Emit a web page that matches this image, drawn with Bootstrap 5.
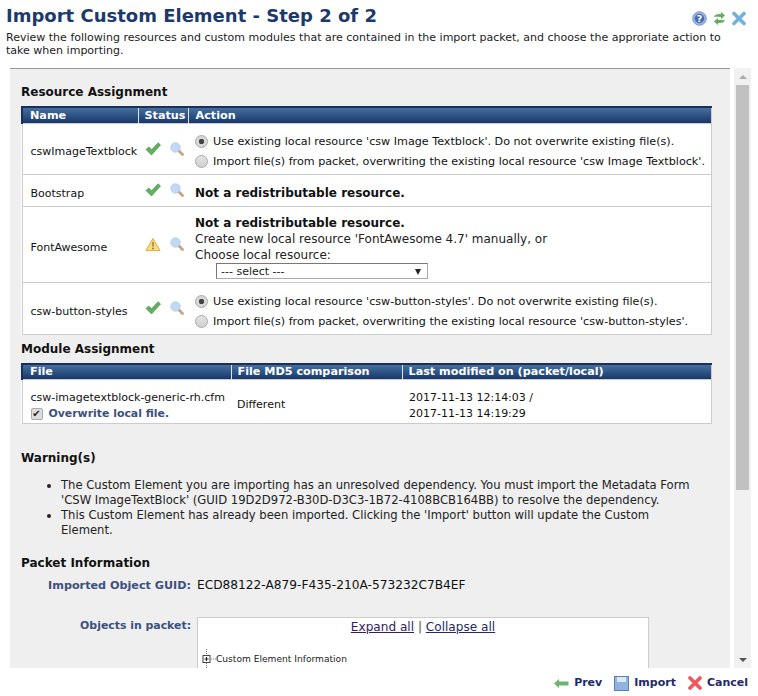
<!DOCTYPE html>
<html lang="en">
<head>
<meta charset="utf-8">
<title>Import Custom Element</title>
<link href="https://cdn.jsdelivr.net/npm/bootstrap@5.3.0/dist/css/bootstrap.min.css" rel="stylesheet">
<style>
html,body{height:696px;overflow:hidden;background:#fff}
body{font-family:"DejaVu Sans",Verdana,sans-serif;font-size:11px;line-height:15px;color:#111;position:relative}
.page-head{padding:4px 6px 0 6px;height:68px;position:relative}
.page-title{font-size:18px;line-height:24px;font-weight:700;color:#1b3a6b;margin:0}
.page-intro{font-size:11.02px;line-height:13px;margin:3px 0 0;color:#222;max-width:722px}
.head-icons{position:absolute;right:12px;top:11px;gap:6px}
.body-row{height:600px;padding-left:10px;padding-right:7px;gap:4px}
.main-panel{width:720px;background:#efefef;border-top:1px solid #999;overflow:hidden;padding:0 18px 0 11px}
.sec-title{font-size:12px;line-height:15px;font-weight:700;color:#111;margin:0}
.res-table{width:691px;table-layout:fixed;border-collapse:collapse;background:#fff;border:1px solid #ccc;margin:0}
.res-table th{background:linear-gradient(#44709f,#18376a);border-top:2px solid #1b2f5a;border-left:1px solid #dfe6ee;color:#fff;font-size:11.2px;font-weight:700;height:16px;line-height:12px;padding:1px 0 0 6px;white-space:nowrap;overflow:hidden}
.res-table th:first-child{border-left:2px solid #1b2f5a;padding-left:7px}
.res-table th.th-act{padding-left:7px}
.res-table td{border-top:1px solid #ccc;padding:6px 0 0 8px;vertical-align:middle;font-size:11px;line-height:15px;white-space:nowrap}
.res-table td.act{padding-left:7px}
.res-table td.st{padding:0 0 0 7px}
.res-table td.mod{padding-top:8px;line-height:16px}
.res-table td.mod-b{padding-left:6px;padding-top:6px}
.res-table td.mod-c{padding-left:7px}
.st-box{gap:9px}
.opt-line{height:20px;gap:5px;font-size:11.17px}
.opt-line input{appearance:none;width:13px;height:13px;margin:0;border-radius:50%;border:1px solid #aaa;background:linear-gradient(#e4e4e4,#cfcfcf);flex:none;display:block}
.opt-line input:checked{background:radial-gradient(circle,#444 0 2.5px,#d8d8d8 3px)}
.big-b{font-size:12px;font-weight:700;line-height:16px;color:#111}
.big-n{font-size:12px;line-height:16px;color:#222}
.sel-box{width:212px;height:16px;margin-left:21px;border:1px solid #aaa;border-top-color:#777;border-left-color:#777;background:#fff;font-size:11px;line-height:14px;padding:1px 4px 0;color:#222}
.sel-arrow{width:0;height:0;border-left:3.5px solid transparent;border-right:3.5px solid transparent;border-top:6px solid #222;margin-right:2px}
.chk-row{gap:6px}
.chk-pic{width:12px;height:12px;border:1px solid #aaa;border-radius:2px;background:#ddd;flex:none;display:flex;align-items:center;justify-content:center;font-size:10px;line-height:10px;color:#222}
.ovr-lab{font-weight:700;color:#3c5080;font-size:10.9px;line-height:16px}
.warn-list{margin:0;padding:0 12px 0 40px;font-size:11.6px;line-height:15px;color:#222}
.form-lab{width:170px;text-align:right;font-weight:700;color:#3c5080;font-size:11.2px;line-height:15px;flex:none;white-space:nowrap}
.form-lab.lab-sm{font-size:10.9px;padding-top:1px}
.form-val{font-size:12.2px;line-height:15px;margin-left:6px;color:#111}
.tree-box{width:452px;height:120px;margin-left:6px;background:#fff;border:1px solid #ccc;font-size:12.1px}
.tree-links{text-align:center;line-height:15px;padding-top:2px;color:#555}
.tree-links a{color:#1f2a66}
.tree-links a.seen{color:#33205f}
.tree-row{margin-top:14px;padding-left:4px;font-size:9.1px;line-height:20px;color:#222}
.scroll-col{width:17px;background:#f1f1f1;position:relative;flex:none}
.scroll-up,.scroll-dn{height:17px;display:flex;align-items:center;justify-content:center}
.arrow-u{width:0;height:0;border-left:4px solid transparent;border-right:4px solid transparent;border-bottom:4px solid #a9a9a9}
.arrow-d{width:0;height:0;border-left:4px solid transparent;border-right:4px solid transparent;border-top:4px solid #555}
.scroll-thumb{margin:0 2px;height:405px;background:#c1c1c1}
.scroll-track{height:161px}
.foot-bar{height:28px;padding:7px 10px 0 0;gap:12px;justify-content:flex-end}
.foot-bar a{color:#1f2a66;font-weight:700;font-size:11px;line-height:16px;text-decoration:none;gap:5px;height:16px}
.gap-b{height:7px}
.gap-c{height:6px}
.pad-top{height:16px}
</style>
</head>
<body>
<svg width="0" height="0" class="position-absolute">
  <symbol id="ic-check" viewBox="0 0 16 14"><path d="M1 7.500 3.800 5 6.500 7.800 13.200.8 15.500 3 6.500 13Z" fill="#62b162" stroke="#3f8a3f" stroke-width=".6" stroke-linejoin="round"/></symbol>
  <symbol id="ic-glass" viewBox="0 0 14 14"><path d="M8.500 8.500l4 4" stroke="#c9a27e" stroke-width="2.800" stroke-linecap="round"/><circle cx="5.500" cy="5.500" r="4.700" fill="#c3d8f5" stroke="#a9c5ec" stroke-width=".8"/></symbol>
</svg>
<div class="page-head">
  <h1 class="page-title">Import Custom Element - Step 2 of 2</h1>
  <p class="page-intro">Review the following resources and custom modules that are contained in the import packet, and choose the approriate action to take when importing.</p>
  <div class="head-icons d-flex align-items-center">
    <svg width="15" height="15" viewBox="0 0 15 15"><circle cx="7.500" cy="7.500" r="6.800" fill="#9db6e0" stroke="#7b98cf"/><circle cx="7.500" cy="7.500" r="4.700" fill="#4a6db0"/><text x="7.500" y="11" text-anchor="middle" font-size="9.500" font-weight="700" fill="#fff" font-family="DejaVu Sans">?</text></svg>
    <svg width="13" height="15" viewBox="0 0 13 15"><path d="M1 6C2 3 5 3 8 3V1l4 3.500L8 8V6C5 6 3 5.500 1 6Z" fill="#62ad62"/><path d="M12 9c-1 3-4 3-7 3v2L1 10.500 5 7v2c3 0 5 .5 7 0Z" fill="#62ad62"/></svg>
    <svg width="14" height="15" viewBox="0 0 14 15"><path d="M2 2.500 12 12.500M12 2.500 2 12.500" stroke="#6fb2dc" stroke-width="3.600" stroke-linecap="round"/></svg>
  </div>
</div>
<div class="body-row d-flex">
  <div class="main-panel">
    <div class="pad-top"></div>
    <h2 class="sec-title">Resource Assignment</h2>
    <div class="gap-c"></div>
    <table class="res-table">
      <colgroup><col style="width:116px"><col style="width:50px"><col></colgroup>
      <tr><th>Name</th><th>Status</th><th class="th-act">Action</th></tr>
      <tr style="height:51px">
        <td>cswImageTextblock</td>
        <td class="st"><div class="st-box d-flex align-items-center">
          <svg width="16" height="14"><use href="#ic-check"/></svg><svg width="14" height="14"><use href="#ic-glass"/></svg>
        </div></td>
        <td class="act">
          <div class="opt-line d-flex align-items-center"><input type="radio" checked name="r1"><span>Use existing local resource 'csw Image Textblock'. Do not overwrite existing file(s).</span></div>
          <div class="opt-line d-flex align-items-center"><input type="radio" name="r1"><span>Import file(s) from packet, overwriting the existing local resource 'csw Image Textblock'.</span></div>
        </td>
      </tr>
      <tr style="height:32px">
        <td>Bootstrap</td>
        <td class="st"><div class="st-box d-flex align-items-center">
          <svg width="16" height="14"><use href="#ic-check"/></svg><svg width="14" height="14"><use href="#ic-glass"/></svg>
        </div></td>
        <td class="act"><div class="big-b">Not a redistributable resource.</div></td>
      </tr>
      <tr style="height:76px">
        <td>FontAwesome</td>
        <td class="st"><div class="st-box d-flex align-items-center">
          <svg width="16" height="15" viewBox="0 0 17 15"><path d="M8.500 1 16 14H1Z" fill="#f7dc7a" stroke="#d9a648" stroke-linejoin="round"/><path d="M7.700 5h1.600l-.3 5H8ZM7.700 11h1.600v1.500H7.700Z" fill="#8a6a20"/></svg>
          <svg width="14" height="14"><use href="#ic-glass"/></svg>
        </div></td>
        <td class="act">
          <div class="big-b">Not a redistributable resource.</div>
          <div class="big-n">Create new local resource 'FontAwesome 4.7' manually, or</div>
          <div class="big-n">Choose local resource:</div>
          <div class="sel-box d-flex align-items-center justify-content-between"><span>--- select ---</span><span class="sel-arrow"></span></div>
        </td>
      </tr>
      <tr style="height:52px">
        <td>csw-button-styles</td>
        <td class="st"><div class="st-box d-flex align-items-center">
          <svg width="16" height="14"><use href="#ic-check"/></svg><svg width="14" height="14"><use href="#ic-glass"/></svg>
        </div></td>
        <td class="act">
          <div class="opt-line d-flex align-items-center"><input type="radio" checked name="r2"><span>Use existing local resource 'csw-button-styles'. Do not overwrite existing file(s).</span></div>
          <div class="opt-line d-flex align-items-center"><input type="radio" name="r2"><span>Import file(s) from packet, overwriting the existing local resource 'csw-button-styles'.</span></div>
        </td>
      </tr>
    </table>
    <div class="gap-b"></div>
    <h2 class="sec-title">Module Assignment</h2>
    <div class="gap-c"></div>
    <table class="res-table">
      <colgroup><col style="width:209px"><col style="width:171px"><col></colgroup>
      <tr><th>File</th><th>File MD5 comparison</th><th>Last modified on (packet/local)</th></tr>
      <tr style="height:44px">
        <td class="mod">
          <div>csw-imagetextblock-generic-rh.cfm</div>
          <div class="d-flex align-items-center chk-row"><span class="chk-pic">✔</span><span class="ovr-lab">Overwrite local file.</span></div>
        </td>
        <td class="mod mod-b">Different</td>
        <td class="mod mod-c"><div>2017-11-13 12:14:03 /</div><div>2017-11-13 14:19:29</div></td>
      </tr>
    </table>
    <div style="height:27px"></div>
    <h2 class="sec-title">Warning(s)</h2>
    <div style="height:12px"></div>
    <ul class="warn-list">
      <li>The Custom Element you are importing has an unresolved dependency. You must import the Metadata Form 'CSW ImageTextBlock' (GUID 19D2D972-B30D-D3C3-1B72-4108BCB164BB) to resolve the dependency.</li>
      <li>This Custom Element has already been imported. Clicking the 'Import' button will update the Custom Element.</li>
    </ul>
    <div style="height:18px"></div>
    <h2 class="sec-title">Packet Information</h2>
    <div style="height:7px"></div>
    <div class="d-flex">
      <div class="form-lab">Imported Object GUID:</div>
      <div class="form-val">ECD88122-A879-F435-210A-573232C7B4EF</div>
    </div>
    <div style="height:24px"></div>
    <div class="d-flex">
      <div class="form-lab lab-sm">Objects in packet:</div>
      <div class="tree-box">
        <div class="tree-links"><a class="seen" href="#">Expand all</a> | <a href="#">Collapse all</a></div>
        <div class="tree-row d-flex align-items-center">
          <svg width="14" height="20" viewBox="0 0 14 20"><path d="M4.500 0v6M4.500 14v6M9 10h5" stroke="#777" stroke-dasharray="1 1"/><rect x="1" y="6.500" width="7" height="7" fill="#fff" stroke="#444"/><path d="M2.500 10h4M4.500 8v4" stroke="#222"/></svg>
          <span>Custom Element Information</span>
        </div>
      </div>
    </div>
  </div>
  <div class="scroll-col">
    <div class="scroll-up"><span class="arrow-u"></span></div>
    <div class="scroll-thumb"></div>
    <div class="scroll-track"></div>
    <div class="scroll-dn"><span class="arrow-d"></span></div>
  </div>
</div>
<div class="foot-bar d-flex">
  <a href="#" class="d-flex align-items-center"><svg width="15" height="9" viewBox="0 0 15 9"><path d="M5 0v2.500h9.500v4H5V9L0 4.500Z" fill="#6cb56c"/></svg>Prev</a>
  <a href="#" class="d-flex align-items-center"><svg width="15" height="15" viewBox="0 0 15 15"><rect x=".5" y=".5" width="14" height="14" fill="#8fb4e4" stroke="#5c7fb0"/><rect x="3" y="1" width="9" height="5" fill="#dfe9f6"/></svg>Import</a>
  <a href="#" class="d-flex align-items-center"><svg width="14" height="14" viewBox="0 0 14 14"><path d="M2 2 12 12M12 2 2 12" stroke="#f0575a" stroke-width="3.600" stroke-linecap="round"/></svg>Cancel</a>
</div>
<script src="https://cdn.jsdelivr.net/npm/bootstrap@5.3.0/dist/js/bootstrap.bundle.min.js"></script>
</body>
</html>
